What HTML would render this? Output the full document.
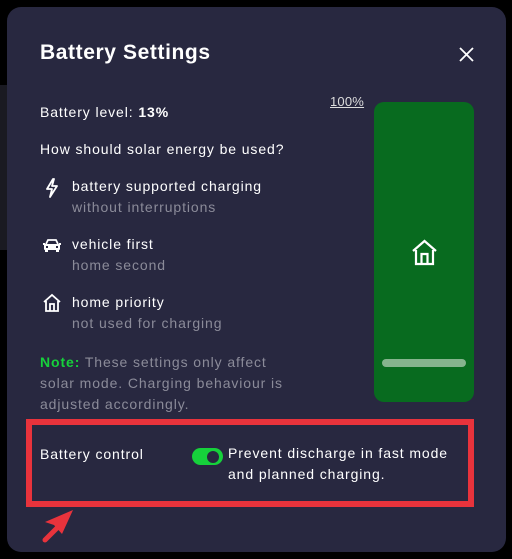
<!DOCTYPE html>
<html><head><style>
*{margin:0;padding:0;box-sizing:border-box}
body{width:512px;height:559px;background:#000;position:relative;overflow:hidden;font-family:"Liberation Sans",sans-serif;color:#fff}
.m{position:absolute;left:7px;top:7px;width:499px;height:545px;background:#282840;border-radius:14px}
.t{position:absolute;white-space:nowrap;font-size:14px;letter-spacing:0.9px}
.g{color:#8b8b99}
</style></head><body>
<div style="position:absolute;left:0;top:85px;width:7px;height:165px;background:#1a1a22"></div>
<div class="m"></div>
<div class="t" style="left:40px;top:41px;font-size:21px;font-weight:bold;letter-spacing:0.6px">Battery Settings</div>
<svg style="position:absolute;left:458px;top:46px" width="17" height="17" viewBox="0 0 17 17"><path d="M2 2L15 15M15 2L2 15" stroke="#fff" stroke-width="1.8"/></svg>
<div class="t" style="left:40px;top:104px">Battery level: <b>13%</b></div>
<div class="t" style="left:330px;top:94px;font-size:13px;text-decoration:underline;color:#ddd;letter-spacing:0.2px">100%</div>
<div class="t" style="left:40px;top:141px">How should solar energy be used?</div>
<svg style="position:absolute;left:45px;top:178px" width="14" height="20" viewBox="0 0 14 20"><path d="M8 1L2 11H7L5 19L12 8H7L9 1Z" fill="none" stroke="#fff" stroke-width="1.8" stroke-linejoin="round"/></svg>
<div class="t" style="left:72px;top:178px">battery supported charging</div>
<div class="t g" style="left:72px;top:199px">without interruptions</div>
<svg style="position:absolute;left:42px;top:238px" width="20" height="15" viewBox="0 0 20 15"><path d="M4 6L6 2H14L16 6" fill="none" stroke="#fff" stroke-width="1.8"/><rect x="2" y="6" width="16" height="6" rx="1" fill="#fff"/><rect x="3" y="11" width="3" height="3" fill="#fff"/><rect x="14" y="11" width="3" height="3" fill="#fff"/><rect x="1" y="5" width="2" height="2" fill="#fff"/><rect x="17" y="5" width="2" height="2" fill="#fff"/><rect x="4" y="8" width="2" height="2" fill="#282840"/><rect x="14" y="8" width="2" height="2" fill="#282840"/></svg>
<div class="t" style="left:72px;top:236px">vehicle first</div>
<div class="t g" style="left:72px;top:257px">home second</div>
<svg style="position:absolute;left:42px;top:293px" width="20" height="20" viewBox="0 0 20 20"><path d="M2 9L10 2L18 9M4 8V18H16V8M8 18V11H12V18" fill="none" stroke="#fff" stroke-width="1.8"/></svg>
<div class="t" style="left:72px;top:294px">home priority</div>
<div class="t g" style="left:72px;top:315px">not used for charging</div>
<div class="t g" style="left:40px;top:352px;line-height:21px;white-space:normal;width:255px"><b style="color:#16d13b">Note:</b> These settings only affect solar mode. Charging behaviour is adjusted accordingly.</div>
<div style="position:absolute;left:374px;top:102px;width:100px;height:300px;background:#086b1f;border-radius:10px"></div>
<svg style="position:absolute;left:411px;top:239px" width="27" height="27" viewBox="0 0 27 27"><path d="M2 12L13.5 2L25 12M5 11V25H22V11M10.5 25V15H16.5V25" fill="none" stroke="#fff" stroke-width="2.2"/></svg>
<div style="position:absolute;left:382px;top:359px;width:84px;height:8px;background:#86b48e;border-radius:4px"></div>
<div style="position:absolute;left:26px;top:419px;width:448px;height:88px;border:6px solid #e8333c"></div>
<div class="t" style="left:40px;top:446px">Battery control</div>
<div style="position:absolute;left:192px;top:448px;width:31px;height:17px;background:#16d13b;border-radius:9px"></div>
<div style="position:absolute;left:207px;top:451px;width:12px;height:12px;background:#282840;border-radius:50%"></div>
<div class="t" style="left:228px;top:443px;line-height:21px">Prevent discharge in fast mode<br>and planned charging.</div>
<svg style="position:absolute;left:40px;top:508px" width="36" height="36" viewBox="0 0 36 36"><path d="M5 32L20 17" stroke="#e8333c" stroke-width="5" stroke-linecap="round"/><path d="M33 2L5 14L14 17L22 26Z" fill="#e8333c"/></svg>
</body></html>
